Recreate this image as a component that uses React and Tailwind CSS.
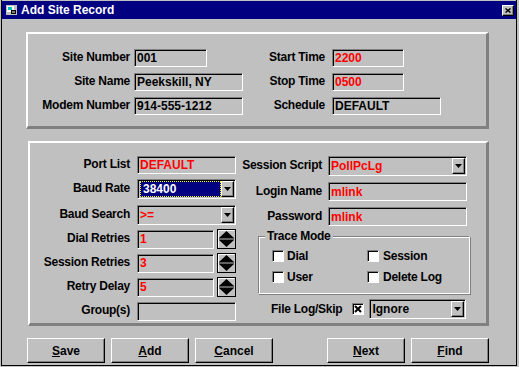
import React from 'react';

// --- shared Win95 bevels ---
const sunken =
  "border border-t-[#808080] border-l-[#808080] border-b-white border-r-white shadow-[inset_1px_1px_0_#000]";
const raised =
  "border border-t-white border-l-white border-b-black border-r-black shadow-[inset_-1px_-1px_0_#808080]";

const DownArrow = () => (
  <svg width="7" height="4" viewBox="0 0 7 4">
    <polygon points="0,0 7,0 3.5,4" fill="#000" />
  </svg>
);

const Field = ({ className, red, children }) => (
  <div
    className={`${sunken} ${className} flex items-center pl-[2px] text-[12px] font-bold leading-none ${
      red ? "text-[#ff0000]" : "text-black"
    }`}
  >
    {children}
  </div>
);

const Combo = ({ className, red, selected, children }) => (
  <div className={`${sunken} ${className} flex items-center pl-[1px] pr-[1px] text-[12px] font-bold leading-none`}>
    <div className="flex-1 h-full flex items-center pl-[1px]">
      {selected ? (
        <div className="w-full h-[16px] bg-[#000080] border border-dotted border-[#ffff00] text-white flex items-center pl-[2px]">
          {children}
        </div>
      ) : (
        <span className={red ? "text-[#ff0000]" : "text-black"}>{children}</span>
      )}
    </div>
    <div className={`${raised} w-[13px] h-[16px] bg-[#c0c0c0] flex items-center justify-center`}>
      <DownArrow />
    </div>
  </div>
);

const Spinner = () => (
  <svg width="19" height="20" viewBox="0 0 19 20" className="shrink-0">
    <rect x="0.5" y="0.5" width="18" height="19" fill="#c0c0c0" stroke="#000" />
    <line x1="1.5" y1="1.5" x2="17.5" y2="1.5" stroke="#fff" />
    <line x1="1.5" y1="1.5" x2="1.5" y2="18.5" stroke="#fff" />
    <polygon points="9.5,2 17,9 2,9" fill="#000" />
    <line x1="2" y1="10" x2="17" y2="10" stroke="#000" />
    <polygon points="2,11 17,11 9.5,18" fill="#000" />
  </svg>
);

const Label = ({ className, children }) => (
  <div className={`${className} text-right text-[12px] tracking-[-0.25px] font-bold text-black leading-none shrink-0 -mt-[2px]`}>
    {children}
  </div>
);

const CheckBox = ({ checked }) => (
  <div className={`${sunken} w-[12px] h-[12px] bg-white flex items-center justify-center shrink-0`}>
    {checked && (
      <svg width="8" height="8" viewBox="0 0 8 8">
        <path d="M1 1 L7 7 M7 1 L1 7" stroke="#000" strokeWidth="2" />
      </svg>
    )}
  </div>
);

const Btn = ({ k, rest }) => (
  <div
    className={`border border-t-white border-l-white border-b-black border-r-black shadow-[inset_-1px_-1px_0_#808080] w-[78px] h-[25px] flex items-center justify-center text-[12px] font-bold text-black`}
  >
    <span>
      <u>{k}</u>
      {rest}
    </span>
  </div>
);

const Row = ({ className, children }) => (
  <div className={`flex items-center ${className}`}>{children}</div>
);

export default function App() {
  return (
    <div className="w-[519px] h-[367px] bg-[#c0c0c0] font-['Liberation_Sans',Arial,sans-serif] overflow-hidden">
      <div className="ml-[1px] w-[516px] h-[366px] border-l border-r border-b border-black flex flex-col">
        {/* title bar */}
        <div className="mt-[1px] h-[18px] bg-[#000080] flex items-center pl-[4px] pr-[1px]">
          <svg width="11" height="10" viewBox="0 0 11 10" className="shrink-0">
            <rect x="0" y="0" width="11" height="10" fill="#c0c0c0" />
            <rect x="1" y="1" width="7" height="6" fill="#fff" />
            <rect x="2" y="2" width="4" height="3" fill="#00c0c0" />
            <rect x="5" y="5" width="5" height="4" fill="#000" />
            <rect x="6" y="6" width="3" height="2" fill="#808080" />
          </svg>
          <span className="ml-[4px] text-white text-[12px] font-bold leading-none">Add Site Record</span>
          <div className={`${raised} ml-auto mr-[1px] w-[12px] h-[11px] bg-[#c0c0c0] flex items-center justify-center`}>
            <svg width="6" height="5" viewBox="0 0 6 5">
              <path d="M0.5 0.5 L5.5 4.5 M5.5 0.5 L0.5 4.5" stroke="#000" strokeWidth="1.4" />
            </svg>
          </div>
        </div>

        {/* panel 1 */}
        <div className="ml-[24px] mt-[13px] w-[463px] h-[97px] border-t-2 border-l-2 border-b-[3px] border-r-[3px] border-t-white border-l-white border-b-[#808080] border-r-[#808080] flex pt-[14px]">
          <div className="w-[215px] flex flex-col gap-[5px]">
            <Row className="h-[19px]">
              <Label className="w-[102px]">Site Number</Label>
              <Field className="ml-[4px] w-[73px] h-[18px]">001</Field>
            </Row>
            <Row className="h-[19px]">
              <Label className="w-[102px]">Site Name</Label>
              <Field className="ml-[4px] w-[109px] h-[18px]">Peekskill, NY</Field>
            </Row>
            <Row className="h-[19px]">
              <Label className="w-[102px]">Modem Number</Label>
              <Field className="ml-[4px] w-[109px] h-[18px]">914-555-1212</Field>
            </Row>
          </div>
          <div className="ml-[7px] flex flex-col gap-[5px]">
            <Row className="h-[19px]">
              <Label className="w-[75px]">Start Time</Label>
              <Field red className="ml-[7px] w-[72px] h-[18px]">2200</Field>
            </Row>
            <Row className="h-[19px]">
              <Label className="w-[75px]">Stop Time</Label>
              <Field red className="ml-[7px] w-[72px] h-[18px]">0500</Field>
            </Row>
            <Row className="h-[19px]">
              <Label className="w-[75px]">Schedule</Label>
              <Field className="ml-[7px] w-[109px] h-[18px]">DEFAULT</Field>
            </Row>
          </div>
        </div>

        {/* panel 2 */}
        <div className="ml-[26px] mt-[12px] w-[461px] h-[185px] border-t-2 border-l-2 border-b-[3px] border-r-[3px] border-t-white border-l-white border-b-[#808080] border-r-[#808080] flex pt-[12px]">
          <div className="w-[208px] flex flex-col gap-[4px]">
            <Row className="h-[20px]">
              <Label className="w-[100px]">Port List</Label>
              <Field red className="ml-[7px] w-[99px] h-[18px]">DEFAULT</Field>
            </Row>
            <Row className="h-[20px]">
              <Label className="w-[100px]">Baud Rate</Label>
              <Combo selected className="ml-[7px] w-[99px] h-[20px]">38400</Combo>
            </Row>
            <Row className="h-[20px] mt-[2px]">
              <Label className="w-[100px]">Baud Search</Label>
              <Combo red className="ml-[7px] w-[99px] h-[20px]">&gt;=</Combo>
            </Row>
            <Row className="h-[20px]">
              <Label className="w-[100px]">Dial Retries</Label>
              <Field red className="ml-[7px] w-[77px] h-[19px]">1</Field>
              <div className="ml-[3px]"><Spinner /></div>
            </Row>
            <Row className="h-[20px]">
              <Label className="w-[100px]">Session Retries</Label>
              <Field red className="ml-[7px] w-[77px] h-[19px]">3</Field>
              <div className="ml-[3px]"><Spinner /></div>
            </Row>
            <Row className="h-[20px]">
              <Label className="w-[100px]">Retry Delay</Label>
              <Field red className="ml-[7px] w-[77px] h-[19px]">5</Field>
              <div className="ml-[3px]"><Spinner /></div>
            </Row>
            <Row className="h-[20px]">
              <Label className="w-[100px]">Group(s)</Label>
              <Field className="ml-[7px] w-[99px] h-[19px]"></Field>
            </Row>
          </div>

          <div className="ml-[2px] w-[232px] flex flex-col">
            <Row className="h-[20px] mt-[1px]">
              <Label className="w-[82px]">Session Script</Label>
              <Combo red className="ml-[6px] w-[139px] h-[20px]">PollPcLg</Combo>
            </Row>
            <Row className="h-[19px] mt-[6px]">
              <Label className="w-[82px]">Login Name</Label>
              <Field red className="ml-[6px] w-[139px] h-[19px]">mlink</Field>
            </Row>
            <Row className="h-[19px] mt-[6px]">
              <Label className="w-[82px]">Password</Label>
              <Field red className="ml-[6px] w-[139px] h-[19px]">mlink</Field>
            </Row>
            <div className="relative ml-[18px] mt-[10px] w-[212px] h-[58px] border border-t-[#808080] border-l-[#808080] border-b-white border-r-white shadow-[inset_1px_1px_0_#fff,1px_1px_0_#808080]">
              <span className="absolute left-[6px] -top-[7px] bg-[#c0c0c0] px-[2px] text-[12px] tracking-[-0.25px] font-bold leading-none">
                Trace Mode
              </span>
              <div className="grid grid-cols-[95px_1fr] gap-y-[9px] pl-[13px] pt-[13px] text-[12px] tracking-[-0.25px] font-bold leading-none">
                <div className="flex items-center gap-[3px]"><CheckBox /><span>Dial</span></div>
                <div className="flex items-center gap-[4px]"><CheckBox /><span>Session</span></div>
                <div className="flex items-center gap-[3px]"><CheckBox /><span>User</span></div>
                <div className="flex items-center gap-[4px]"><CheckBox /><span>Delete Log</span></div>
              </div>
            </div>
            <Row className="h-[20px] mt-[5px]">
              <span className="ml-[31px] text-[12px] tracking-[-0.25px] font-bold leading-none">File Log/Skip</span>
              <div className="ml-[10px]"><CheckBox checked /></div>
              <Combo className="ml-[5px] w-[97px] h-[20px]">Ignore</Combo>
            </Row>
          </div>
        </div>

        {/* buttons */}
        <div className="ml-[25px] mt-[12px] flex">
          <Btn k="S" rest="ave" />
          <div className="ml-[6px]"><Btn k="A" rest="dd" /></div>
          <div className="ml-[6px]"><Btn k="C" rest="ancel" /></div>
          <div className="ml-[54px]"><Btn k="N" rest="ext" /></div>
          <div className="ml-[6px]"><Btn k="F" rest="ind" /></div>
        </div>
      </div>
    </div>
  );
}
